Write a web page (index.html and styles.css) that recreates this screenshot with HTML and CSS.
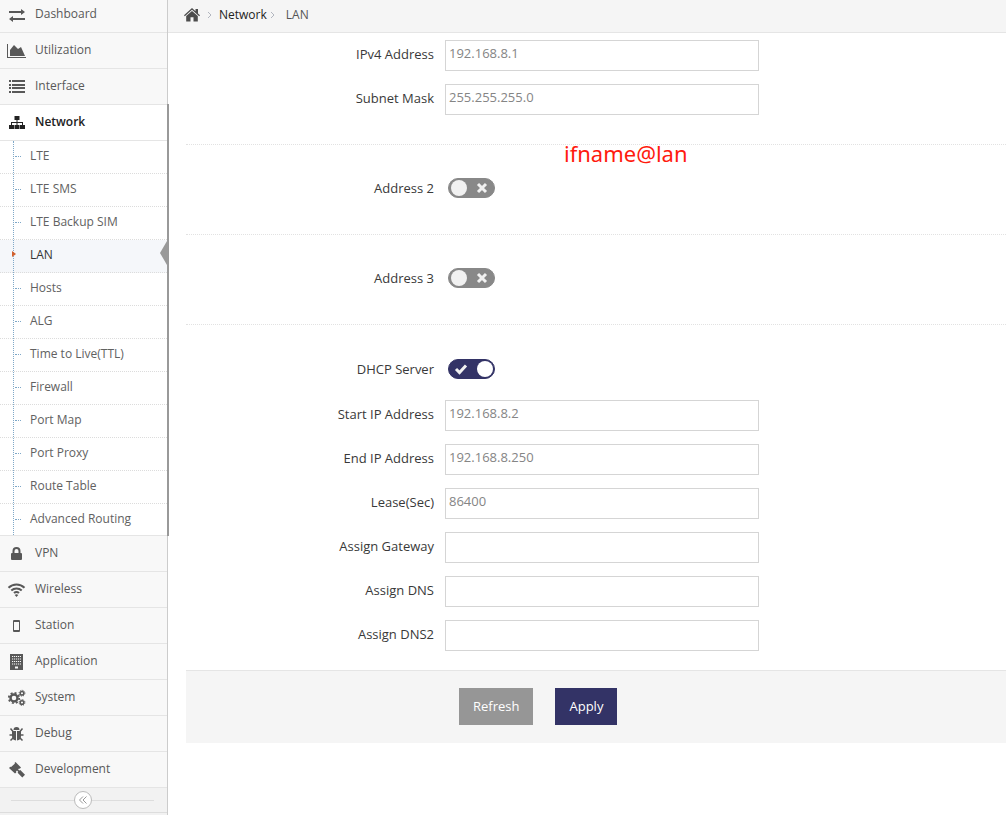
FILE: index.html
```html
<!DOCTYPE html>
<html lang="en">
<head>
<meta charset="utf-8">
<title>LAN</title>
<link rel="stylesheet" href="styles.css">
</head>
<body>
<div class="layout">
  <nav class="sidebar" aria-label="Main">
    <ul class="menu">
      <li><a class="item" href="#"><svg class="icon" viewBox="0 0 19 19"><path d="M2 6h12V4l4 3-4 3V8H2zM18 15H6v2l-4-3 4-3v2h12z"/></svg>Dashboard</a></li>
      <li><a class="item" href="#"><svg class="icon" viewBox="0 0 19 19"><path d="M0 3h1v13h18v1H0zM3 15V9l4-5 4 4 3-2 4 9z"/></svg>Utilization</a></li>
      <li><a class="item" href="#"><svg class="icon" viewBox="0 0 19 19"><path d="M2 3h2v2H2zM5 3h13v2H5zM2 7h2v2H2zM5 7h13v2H5zM2 10h2v2H2zM5 10h13v2H5zM2 14h2v2H2zM5 14h13v2H5z"/></svg>Interface</a></li>
      <li class="open">
        <a class="item" href="#"><svg class="icon" viewBox="0 0 19 19"><path d="M7.500 3h5v4h-2v2H16v3h2v4h-5v-4h2v-2h-4.500v2h2v4h-5v-4h2v-2H5v2h2v4H2v-4h2V9h5.500V7h-2z"/></svg>Network</a>
        <ul class="submenu">
          <li><a href="#">LTE</a></li>
          <li><a href="#">LTE SMS</a></li>
          <li><a href="#">LTE Backup SIM</a></li>
          <li class="current"><a href="#" aria-current="page">LAN</a></li>
          <li><a href="#">Hosts</a></li>
          <li><a href="#">ALG</a></li>
          <li><a href="#">Time to Live(TTL)</a></li>
          <li><a href="#">Firewall</a></li>
          <li><a href="#">Port Map</a></li>
          <li><a href="#">Port Proxy</a></li>
          <li><a href="#">Route Table</a></li>
          <li><a href="#">Advanced Routing</a></li>
        </ul>
      </li>
      <li><a class="item" href="#"><svg class="icon" viewBox="0 0 19 19"><path fill-rule="evenodd" d="M5.500 9V7a4 4 0 0 1 8 0v2h.5q1 0 1 1v5q0 1-1 1H5q-1 0-1-1v-5q0-1 1-1zM7.500 9h4V7a2 2 0 0 0-4 0z"/></svg>VPN</a></li>
      <li><a class="item" href="#"><svg class="icon" viewBox="0 0 19 19"><g fill="none" stroke="currentColor" stroke-width="2"><path d="M1.500 7.700a11.500 11.500 0 0 1 16 0M4.300 10.500a7.500 7.500 0 0 1 10.400 0M7 13.100a3.700 3.700 0 0 1 5 0"/></g><path d="M9.500 17 7.700 15.100a2.600 2.600 0 0 1 3.600 0z"/></svg>Wireless</a></li>
      <li><a class="item" href="#"><svg class="icon" viewBox="0 0 19 19"><path fill-rule="evenodd" d="M7 4h5q1 0 1 1v10q0 1-1 1H7q-1 0-1-1V5q0-1 1-1zM7 6v8h5V6z"/></svg>Station</a></li>
      <li><a class="item" href="#"><svg class="icon" viewBox="0 0 19 19"><path d="M3 2h13v16H3z"/><path class="cutout" d="M5 4.500h9M5 7h9M5 9.500h9M5 12h9" stroke-dasharray="1.200 .8"/><path class="cutout wide" d="M8 15.500h3"/></svg>Application</a></li>
      <li><a class="item" href="#"><svg class="icon" viewBox="0 0 19 19"><g fill="none" stroke="currentColor"><circle cx="7" cy="10" r="3.500" stroke-width="2.400"/><circle cx="7" cy="10" r="5.200" stroke-width="1.800" stroke-dasharray="2 2.080"/><circle cx="15" cy="5.200" r="1.800" stroke-width="1.500"/><circle cx="15" cy="5.200" r="2.900" stroke-width="1" stroke-dasharray="1.200 1.080"/><circle cx="15" cy="14.500" r="1.800" stroke-width="1.500"/><circle cx="15" cy="14.500" r="2.900" stroke-width="1" stroke-dasharray="1.200 1.080"/></g></svg>System</a></li>
      <li><a class="item" href="#"><svg class="icon" viewBox="0 0 19 19"><path d="M6.500 6a3 3 0 0 1 6 0zM5 7h4v9.500Q5 16 5 12zM10 7h4v5q0 4-4 4.500z"/><path fill="none" stroke="currentColor" stroke-width="1.500" d="M3.500 4.500 6 7.500M15.500 4.500 13 7.500M2.500 11H6M16.500 11H13M3.500 16.500l3-3M15.500 16.500l-3-3"/></svg>Debug</a></li>
      <li><a class="item" href="#"><svg class="icon" viewBox="0 0 19 19"><path d="M8.500 2 14 7.500l-1.200 1.200-.8-.2-.9.900 1.200 1.200 1-.6L18 14.700 15.300 17.500l-4.700-4.700.6-1-1.200-1.200-1 1 .3.800L8 13.600 2 8l1.300-1.200.8.300L8 3.600 7.500 3z"/></svg>Development</a></li>
    </ul>
    <div class="collapse"><button type="button" class="collapse-button" aria-label="Collapse menu"><svg viewBox="0 0 10 10"><path d="M5 1.500 1.500 5 5 8.500M8.500 1.500 5 5l3.500 3.500"/></svg></button></div>
  </nav>

  <main class="main">
    <nav class="breadcrumb" aria-label="Breadcrumb">
      <a class="home-link" href="#" aria-label="Home"><svg class="home" viewBox="0 0 16 14"><path d="M8 0 11.500 3.200V1H14v4.500L16 7.300l-.8.900L8 1.800.8 8.200 0 7.300zM8 3l5.800 5v5.500H9.500V9.300h-3v4.200H2.200V8z"/></svg></a>
      <svg class="chevron" viewBox="0 0 5 8"><path d="M1 1l3 3-3 3"/></svg>
      <a href="#">Network</a>
      <svg class="chevron" viewBox="0 0 5 8"><path d="M1 1l3 3-3 3"/></svg>
      <span class="here">LAN</span>
    </nav>

    <form class="form">
      <section class="group">
        <div class="field"><label for="ip">IPv4 Address</label><input class="text" id="ip" type="text" value="192.168.8.1"></div>
        <div class="field"><label for="mask">Subnet Mask</label><input class="text" id="mask" type="text" value="255.255.255.0"></div>
        <span class="note">ifname@lan</span>
      </section>
      <section class="group">
        <div class="field switch-field"><label for="addr2">Address 2</label><span class="switch"><input id="addr2" type="checkbox"><svg class="cross" viewBox="0 0 12 12"><path d="M2 2l8 8M10 2l-8 8"/></svg></span></div>
      </section>
      <section class="group">
        <div class="field switch-field"><label for="addr3">Address 3</label><span class="switch"><input id="addr3" type="checkbox"><svg class="cross" viewBox="0 0 12 12"><path d="M2 2l8 8M10 2l-8 8"/></svg></span></div>
      </section>
      <section class="group last">
        <div class="field switch-field"><label for="dhcp">DHCP Server</label><span class="switch"><input id="dhcp" type="checkbox" checked><svg class="tick" viewBox="0 0 14 12"><path d="M2 6l3.500 3.500L12 2.500"/></svg></span></div>
        <div class="field"><label for="start">Start IP Address</label><input class="text" id="start" type="text" value="192.168.8.2"></div>
        <div class="field"><label for="end">End IP Address</label><input class="text" id="end" type="text" value="192.168.8.250"></div>
        <div class="field"><label for="lease">Lease(Sec)</label><input class="text" id="lease" type="text" value="86400"></div>
        <div class="field"><label for="gateway">Assign Gateway</label><input class="text" id="gateway" type="text"></div>
        <div class="field"><label for="dns">Assign DNS</label><input class="text" id="dns" type="text"></div>
        <div class="field"><label for="dns2">Assign DNS2</label><input class="text" id="dns2" type="text"></div>
      </section>
      <div class="actions">
        <button type="button" class="button">Refresh</button>
        <button type="submit" class="button primary">Apply</button>
      </div>
    </form>
  </main>
</div>
</body>
</html>
```

FILE: styles.css
```css
* { box-sizing: border-box; }

body {
  margin: 0;
  overflow: hidden;
  background: #fff;
  color: #393939;
  font: 13px/20px "Open Sans", "Noto Sans", sans-serif;
}

a { color: inherit; text-decoration: none; }
ul { margin: 0; padding: 0; list-style: none; }
svg { display: block; flex: none; fill: currentColor; }

.layout { display: flex; min-height: 100vh; }

/* Sidebar */
.sidebar {
  flex: none;
  width: 168px;
  border-right: 1px solid #ccc;
  background: #f2f2f2;
  font-size: 12px;
}
.menu { margin-top: -3px; }
.item {
  display: flex;
  align-items: center;
  gap: 9px;
  height: 36px;
  padding: 0 0 2px 7px;
  border-bottom: 1px solid #e5e5e5;
  background: #f8f8f8;
  color: #585858;
}
.icon { width: 19px; height: 19px; margin-top: 2px; }
.cutout { fill: none; stroke: #f8f8f8; stroke-width: 1; }
.cutout.wide { stroke-width: 2; }

.open { position: relative; background: #fff; }
.open::after {
  content: "";
  position: absolute;
  top: -1px;
  right: -2px;
  bottom: 0;
  width: 2px;
  background: #999;
}
.open .item { background: #fff; color: #222; font-weight: 600; }

.submenu { position: relative; border-bottom: 1px solid #e5e5e5; }
.submenu::before {
  content: "";
  position: absolute;
  z-index: 1;
  top: 0;
  bottom: 0;
  left: 13px;
  border-left: 1px dotted #7fa8c8;
}
.submenu li { position: relative; border-bottom: 1px dotted #dcdcdc; }
.submenu li:last-child { border-bottom: 0; }
.submenu li::before {
  content: "";
  position: absolute;
  top: 15px;
  left: 15px;
  width: 6px;
  border-top: 1px dotted #7fa8c8;
}
.submenu a { display: block; padding: 5px 0 7px 30px; color: #616161; }
.submenu li:last-child a { padding-bottom: 6px; }
.submenu .current { background: #f5f7fa; }
.submenu .current a { color: #333; }
.submenu .current::before {
  z-index: 2;
  top: 11px;
  left: 12px;
  width: 0;
  border: solid transparent;
  border-width: 3px 0 3px 4px;
  border-left-color: #d2602d;
}
.submenu .current::after {
  content: "";
  position: absolute;
  top: 1px;
  right: 0;
  border: solid transparent;
  border-width: 12px 7px 12px 0;
  border-right-color: #999;
}

.collapse {
  display: flex;
  align-items: center;
  height: 25px;
  padding: 0 13px 0 11px;
  border-bottom: 1px solid #ddd;
}
.collapse::before, .collapse::after {
  content: "";
  flex: 1;
  border-top: 1px solid #ddd;
}
.collapse-button {
  display: grid;
  place-items: center;
  width: 18px;
  height: 18px;
  padding: 0;
  border: 1px solid #bbb;
  border-radius: 50%;
  background: #fff;
}
.collapse-button svg { width: 10px; height: 10px; fill: none; stroke: #999; }

/* Content */
.main { flex: 1; min-width: 0; }
.breadcrumb {
  display: flex;
  align-items: center;
  height: 33px;
  padding: 0 16px 3px;
  border-bottom: 1px solid #e5e5e5;
  background: #f5f5f5;
  color: #222;
  font-size: 12px;
}
.home-link { margin-right: 4px; }
.home { width: 16px; height: 14px; fill: #4c4c4c; }
.chevron {
  width: 5px;
  height: 8px;
  margin: 0 7px 0 3px;
  fill: none;
  stroke: #b2b6bf;
}
.here { margin-left: 4px; color: #555; }

.form { padding: 7px 0 0 18px; }
.group {
  position: relative;
  display: grid;
  gap: 13px;
  padding: 27px 0 30px;
  border-bottom: 1px dotted #e2e2e2;
}
.group:first-child { padding: 0 0 29px; }
.group.last { padding: 28px 0 19px; border-bottom: 0; }
.field {
  display: grid;
  grid-template-columns: 248px minmax(0, 314px);
  align-items: center;
  column-gap: 11px;
}
.field label { padding-bottom: 3px; text-align: right; }
.switch-field label { padding-bottom: 0; }
.text {
  width: 100%;
  height: 31px;
  padding: 0 3px 5px;
  border: 1px solid #d5d5d5;
  border-radius: 0;
  background: #fff;
  color: #858585;
  font: inherit;
}
.switch-field { min-height: 32px; }
.last .switch-field { margin-bottom: 2px; }
.switch { position: relative; width: 47px; height: 20px; margin-left: 3px; }
.switch input {
  appearance: none;
  display: block;
  width: 47px;
  height: 20px;
  margin: 0;
  padding: 1px;
  border: 1px solid #888;
  border-radius: 10px;
  background: #888;
}
.switch input::before {
  content: "";
  display: block;
  width: 16px;
  height: 16px;
  margin-left: 1px;
  border-radius: 50%;
  background: #f1f1f1;
}
.switch input:checked { border-color: #336; background: #336; }
.switch input:checked::before { margin-left: auto; background: #fff; }
.switch svg {
  position: absolute;
  fill: none;
  stroke: #f1f1f1;
  stroke-width: 3;
  pointer-events: none;
}
.cross { top: 4px; right: 7px; width: 12px; height: 12px; }
.tick { top: 4px; left: 6px; width: 14px; height: 12px; }

.note {
  position: absolute;
  bottom: -25px;
  left: 378px;
  color: #ff1a0e;
  font: 22px/32px "Noto Sans", "Open Sans", sans-serif;
}

.actions {
  display: flex;
  gap: 22px;
  padding: 17px 0 18px 273px;
  border-top: 1px solid #e5e5e5;
  background: #f5f5f5;
}
.button {
  height: 37px;
  padding: 0 14px 1px;
  border: 0;
  background: #969696;
  color: #fff;
  font: inherit;
}
.primary { background: #336; }
```
